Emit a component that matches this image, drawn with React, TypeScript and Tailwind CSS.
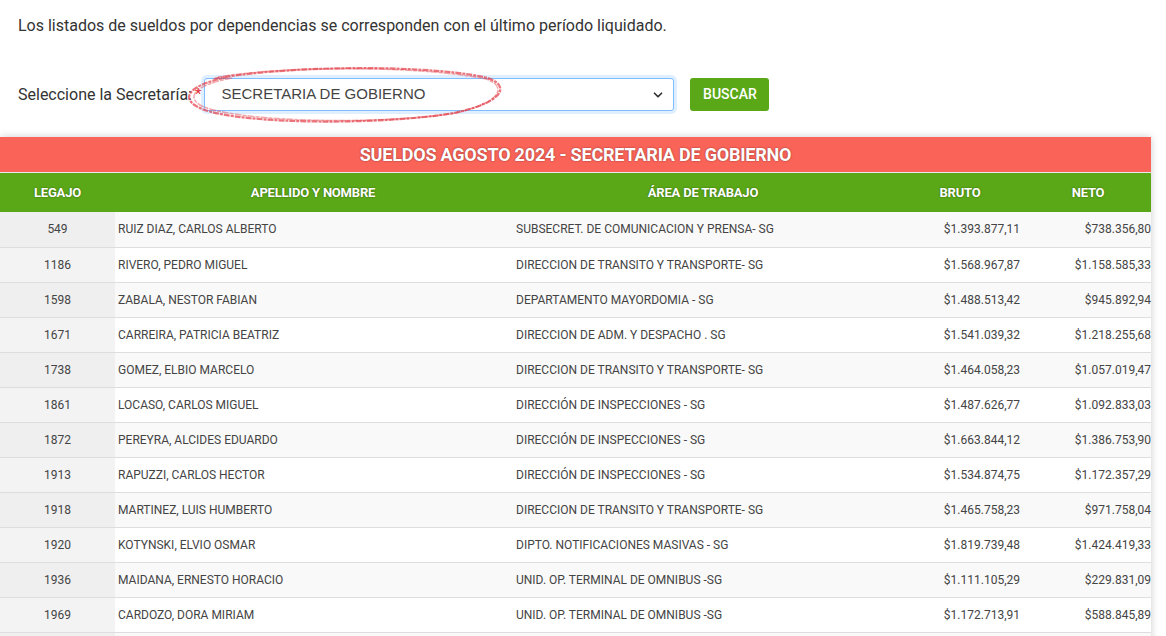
import React from 'react';
import { ChevronDown } from 'lucide-react';

interface IRow {
  legajo: string;
  nombre: string;
  area: string;
  bruto: string;
  neto: string;
}

const rows: IRow[] = [
  { legajo: '549', nombre: 'RUIZ DIAZ, CARLOS ALBERTO', area: 'SUBSECRET. DE COMUNICACION Y PRENSA- SG', bruto: '$1.393.877,11', neto: '$738.356,80' },
  { legajo: '1186', nombre: 'RIVERO, PEDRO MIGUEL', area: 'DIRECCION DE TRANSITO Y TRANSPORTE- SG', bruto: '$1.568.967,87', neto: '$1.158.585,33' },
  { legajo: '1598', nombre: 'ZABALA, NESTOR FABIAN', area: 'DEPARTAMENTO MAYORDOMIA - SG', bruto: '$1.488.513,42', neto: '$945.892,94' },
  { legajo: '1671', nombre: 'CARREIRA, PATRICIA BEATRIZ', area: 'DIRECCION DE ADM. Y DESPACHO . SG', bruto: '$1.541.039,32', neto: '$1.218.255,68' },
  { legajo: '1738', nombre: 'GOMEZ, ELBIO MARCELO', area: 'DIRECCION DE TRANSITO Y TRANSPORTE- SG', bruto: '$1.464.058,23', neto: '$1.057.019,47' },
  { legajo: '1861', nombre: 'LOCASO, CARLOS MIGUEL', area: 'DIRECCIÓN DE INSPECCIONES - SG', bruto: '$1.487.626,77', neto: '$1.092.833,03' },
  { legajo: '1872', nombre: 'PEREYRA, ALCIDES EDUARDO', area: 'DIRECCIÓN DE INSPECCIONES - SG', bruto: '$1.663.844,12', neto: '$1.386.753,90' },
  { legajo: '1913', nombre: 'RAPUZZI, CARLOS HECTOR', area: 'DIRECCIÓN DE INSPECCIONES - SG', bruto: '$1.534.874,75', neto: '$1.172.357,29' },
  { legajo: '1918', nombre: 'MARTINEZ, LUIS HUMBERTO', area: 'DIRECCION DE TRANSITO Y TRANSPORTE- SG', bruto: '$1.465.758,23', neto: '$971.758,04' },
  { legajo: '1920', nombre: 'KOTYNSKI, ELVIO OSMAR', area: 'DIPTO. NOTIFICACIONES MASIVAS - SG', bruto: '$1.819.739,48', neto: '$1.424.419,33' },
  { legajo: '1936', nombre: 'MAIDANA, ERNESTO HORACIO', area: 'UNID. OP. TERMINAL DE OMNIBUS -SG', bruto: '$1.111.105,29', neto: '$229.831,09' },
  { legajo: '1969', nombre: 'CARDOZO, DORA MIRIAM', area: 'UNID. OP. TERMINAL DE OMNIBUS -SG', bruto: '$1.172.713,91', neto: '$588.845,89' },
  // next row only peeks in at the bottom edge
  { legajo: '', nombre: '', area: '', bruto: '', neto: '' },
];

const headShadow = '[text-shadow:0_0_2px_rgba(0,0,0,0.45)]';

const App = () => {
  return (
    <div className="bg-white h-[636px] overflow-hidden font-['Roboto',sans-serif]">
      {/* Intro */}
      <p className="pl-[18px] pt-[14px] text-[16px] leading-6 text-[#333]">
        Los listados de sueldos por dependencias se corresponden con el último período liquidado.
      </p>

      {/* Filter row */}
      <div className="relative flex items-center pl-[18px] mt-[40px] h-[33px]">
        <span className="text-[16px] text-[#333]">Seleccione la Secretaría:</span>
        <span className="text-[#e0303a] text-[15px] ml-[3px] mr-[3px]">*</span>
        <div className="flex items-center justify-between w-[470px] h-[33px] border border-[#80bdff] rounded-[3px] bg-white shadow-[0_0_0_3px_rgba(0,123,255,0.12)] pl-[16px] pr-[8px]">
          <span className="font-['Liberation_Sans',Arial,sans-serif] text-[15px] text-[#444]">
            SECRETARIA DE GOBIERNO
          </span>
          <ChevronDown className="w-[14px] h-[14px] text-[#333]" strokeWidth={3} />
        </div>
        <button className="ml-[16px] h-[33px] w-[79px] rounded-[3px] bg-[#5aa817] text-white text-[14px] font-medium">
          BUSCAR
        </button>

        {/* Hand-drawn annotation */}
        <svg className="absolute left-[184px] top-[-13px] pointer-events-none" width="322" height="60" viewBox="0 0 322 60">
          <path
            d="M30 14 C 90 2, 230 -2, 300 12 C 330 20, 318 38, 270 48 C 200 60, 60 60, 18 44 C -6 34, 4 20, 44 12"
            fill="none"
            stroke="#e23b45"
            strokeOpacity="0.7"
            strokeWidth="2.2"
            strokeDasharray="6 1 3 1"
          />
          <path
            d="M34 12 C 100 1, 232 0, 302 14 C 326 22, 314 40, 266 49 C 196 59, 64 58, 20 42 C 0 33, 10 20, 48 13"
            fill="none"
            stroke="#e23b45"
            strokeOpacity="0.45"
            strokeWidth="1.5"
            strokeDasharray="4 1 7 1"
          />
        </svg>
      </div>

      {/* Table */}
      <div className="mt-[26px] w-[1151px] shadow-[0_0_8px_rgba(0,0,0,0.2)]">
        <div className={`h-[36px] bg-[#fa6358] border-b border-[#e8e8e8] flex items-center justify-center text-white text-[18px] font-bold tracking-[-0.2px] ${headShadow}`}>
          SUELDOS AGOSTO 2024 - SECRETARIA DE GOBIERNO
        </div>
        <table className="w-full table-fixed border-collapse text-[12px] text-[#444]">
          <colgroup>
            <col className="w-[115px]" />
            <col className="w-[396px]" />
            <col className="w-[384px]" />
            <col className="w-[130px]" />
            <col className="w-[126px]" />
          </colgroup>
          <thead>
            <tr className={`h-[39px] bg-[#5aa817] text-white text-[13px] font-bold tracking-[-0.2px] ${headShadow}`}>
              <th className="text-center">LEGAJO</th>
              <th className="text-center">APELLIDO Y NOMBRE</th>
              <th className="text-center">ÁREA DE TRABAJO</th>
              <th className="text-center">BRUTO</th>
              <th className="text-center">NETO</th>
            </tr>
          </thead>
          <tbody>
            {rows.map((r, i) => (
              <tr key={i} className={`h-[35px] border-b border-[#dedede] ${i % 2 === 0 ? 'bg-[#f9f9f9]' : 'bg-white'}`}>
                <td className={`text-center ${i % 2 === 0 ? 'bg-[#efefef]' : 'bg-[#f3f3f3]'}`}>{r.legajo}</td>
                <td className="pl-[3px]">{r.nombre}</td>
                <td className="pl-[5px]">{r.area}</td>
                <td className="text-right pr-[5px]">{r.bruto}</td>
                <td className="text-right pr-0">{r.neto}</td>
              </tr>
            ))}
          </tbody>
        </table>
      </div>
    </div>
  );
};

export default App;
